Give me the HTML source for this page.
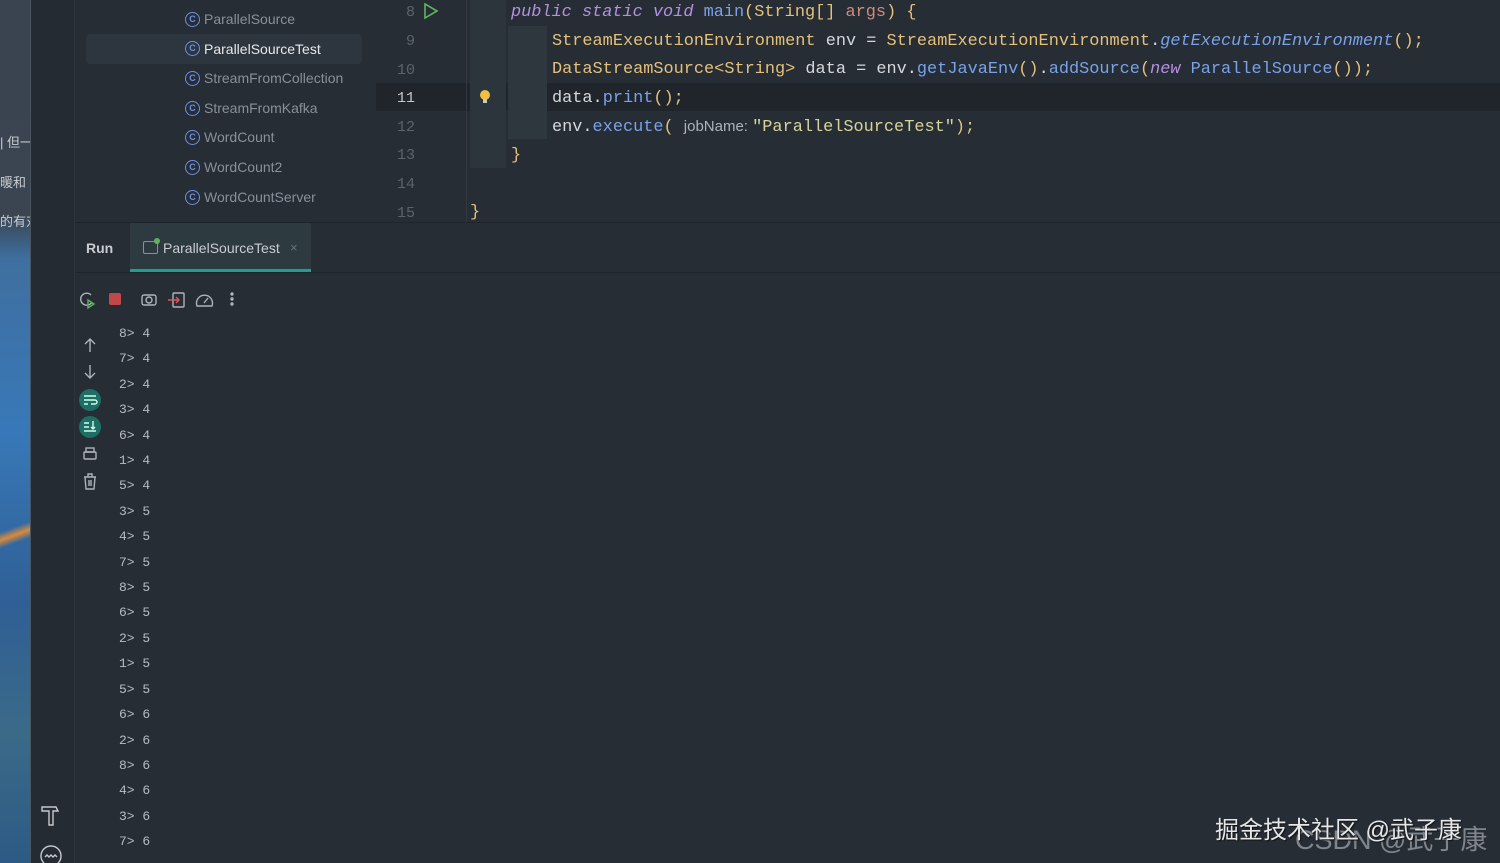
<!DOCTYPE html>
<html><head><meta charset="utf-8"><style>
*{margin:0;padding:0;box-sizing:border-box}
html,body{width:1500px;height:863px;overflow:hidden}
body{background:#262d35;position:relative;font-family:"Liberation Sans","Noto Sans CJK SC",sans-serif;color:#bcbec4}
.a{position:absolute;white-space:pre}
.code{font-family:"Liberation Mono",monospace;font-size:16.9px;line-height:20px}
.ln{font-family:"Liberation Mono",monospace;font-size:15px;color:#5c636c;width:40px;text-align:right}
.out{font-family:"Liberation Mono",monospace;font-size:13px;color:#b7bcc2;left:119px}
.y{color:#e5c07b}.b{color:#7aa2e8}.p{color:#b58fe0;font-style:italic}.s{color:#d6d49a}.r{color:#d08c7a}.w{color:#d5d8dc}
.tree{font-size:14px;color:#8a9099;left:204px}
.ci{position:absolute;left:185px;width:15px;height:15px;border:1.5px solid #6f8fe6;border-radius:50%;font-size:9px;color:#6f8fe6;text-align:center;line-height:12px;font-weight:bold}
</style></head><body>
<div class="a" style="left:0;top:0;width:30px;height:863px;background:linear-gradient(180deg,#3a4450 0%,#3b4552 25%,#3f6f9f 30%,#3878b8 50%,#2f5f95 70%,#3b6a88 85%,#2d5a85 100%)"></div>
<div class="a" style="left:0;top:520px;width:30px;height:30px;background:linear-gradient(160deg,transparent 30%,#d98a3a 50%,transparent 70%)"></div>
<div class="a" style="left:0;top:132px;font-size:13px;color:#c8ccd2">| 但一</div>
<div class="a" style="left:0;top:172px;font-size:13px;color:#c8ccd2">暖和</div>
<div class="a" style="left:0;top:211px;font-size:13px;color:#c8ccd2">的有对</div>
<div class="a" style="left:30px;top:0;width:1px;height:863px;background:#4b5560"></div>
<div class="a" style="left:31px;top:0;width:43px;height:863px;background:#252b32"></div>
<div class="a" style="left:74px;top:0;width:1px;height:863px;background:#2c333b"></div>

<div class="a" style="left:86px;top:34px;width:276px;height:30px;background:#2d353e;border-radius:4px"></div>
<div class="ci" style="top:12px">C</div><div class="a tree" style="top:11px">ParallelSource</div>
<div class="ci" style="top:41px">C</div><div class="a tree" style="top:41px;color:#e6e8eb">ParallelSourceTest</div>
<div class="ci" style="top:71px">C</div><div class="a tree" style="top:70px">StreamFromCollection</div>
<div class="ci" style="top:101px">C</div><div class="a tree" style="top:100px">StreamFromKafka</div>
<div class="ci" style="top:130px">C</div><div class="a tree" style="top:129px">WordCount</div>
<div class="ci" style="top:160px">C</div><div class="a tree" style="top:159px">WordCount2</div>
<div class="ci" style="top:190px">C</div><div class="a tree" style="top:189px">WordCountServer</div>

<div class="a" style="left:376px;top:83px;width:1124px;height:28px;background:#1f252b"></div>
<div class="a" style="left:466px;top:0;width:1px;height:222px;background:#313840"></div>
<div class="a" style="left:470px;top:0;width:36px;height:168px;background:#2c343c"></div>
<div class="a" style="left:508px;top:26px;width:39px;height:113px;background:#2e363e"></div>
<div class="a ln" style="left:375px;top:4px">8</div>
<div class="a ln" style="left:375px;top:33px">9</div>
<div class="a ln" style="left:375px;top:62px">10</div>
<div class="a ln" style="left:375px;top:90px;color:#c5c8cc">11</div>
<div class="a ln" style="left:375px;top:119px">12</div>
<div class="a ln" style="left:375px;top:147px">13</div>
<div class="a ln" style="left:375px;top:176px">14</div>
<div class="a ln" style="left:375px;top:205px">15</div>
<svg class="a" style="left:422px;top:2px" width="18" height="18"><path d="M3 2 L15 9 L3 16 Z" fill="none" stroke="#5fb35f" stroke-width="1.6"/></svg>
<svg class="a" style="left:478px;top:88px" width="14" height="18"><circle cx="7" cy="7" r="5" fill="#f0c040"/><rect x="5" y="11" width="4" height="4" fill="#c9c9c9"/></svg>

<div class="a code" style="left:511px;top:3px"><span class="p">public static void </span><span class="b">main</span><span class="y">(String[] </span><span class="r">args</span><span class="y">) {</span></div>
<div class="a code" style="left:552px;top:32px"><span class="y">StreamExecutionEnvironment </span><span class="w">env = </span><span class="y">StreamExecutionEnvironment</span><span class="w">.</span><span class="b" style="font-style:italic">getExecutionEnvironment</span><span class="y">();</span></div>
<div class="a code" style="left:552px;top:60px"><span class="y">DataStreamSource&lt;String&gt; </span><span class="w">data = env.</span><span class="b">getJavaEnv</span><span class="y">()</span><span class="w">.</span><span class="b">addSource</span><span class="y">(</span><span class="p">new </span><span class="b">ParallelSource</span><span class="y">());</span></div>
<div class="a code" style="left:552px;top:89px"><span class="w">data.</span><span class="b">print</span><span class="y">();</span></div>
<div class="a code" style="left:552px;top:117px"><span class="w">env.</span><span class="b">execute</span><span class="y">( </span><span style="font-family:'Liberation Sans';font-size:15px;color:#aeb3b9">jobName: </span><span class="s">"ParallelSourceTest"</span><span class="y">);</span></div>
<div class="a code" style="left:511px;top:146px"><span class="y">}</span></div>
<div class="a code" style="left:470px;top:203px"><span class="y">}</span></div>

<div class="a" style="left:75px;top:222px;width:1425px;height:1px;background:#1e2429"></div>
<div class="a" style="left:75px;top:272px;width:1425px;height:1px;background:#1f252b"></div>
<div class="a" style="left:130px;top:223px;width:181px;height:49px;background:#2d3a40"></div>
<div class="a" style="left:130px;top:269px;width:181px;height:3px;background:#1f9e92"></div>
<div class="a" style="left:86px;top:240px;font-size:14px;font-weight:bold;color:#c9ccd0">Run</div>
<div class="a" style="left:143px;top:241px;width:15px;height:13px;border:1.5px solid #6f8fe6;border-radius:2px"></div>
<div class="a" style="left:154px;top:238px;width:6px;height:6px;background:#5fb35f;border-radius:50%"></div>
<div class="a" style="left:163px;top:240px;font-size:14px;color:#c9ccd0">ParallelSourceTest</div>
<div class="a" style="left:290px;top:240px;font-size:13px;color:#6c737b">×</div>

<svg class="a" style="left:78px;top:290px" width="170" height="20" fill="none" stroke="#aeb3b9" stroke-width="1.4">
<path d="M13 5 A6 6 0 1 0 14 12"/><path d="M10 10 L16 14 L10 18 Z" stroke="#5fb35f"/>
<rect x="31" y="3" width="12" height="12" rx="2" fill="#c14848" stroke="none"/>
<rect x="64" y="5" width="14" height="10" rx="2"/><circle cx="71" cy="10" r="3"/>
<rect x="95" y="3" width="11" height="14" rx="1"/><path d="M90 10 H101 M98 7 L101 10 L98 13" stroke="#e05555"/>
<path d="M119 16 A8 8 0 1 1 134 16 Z"/><path d="M126 13 L130 8"/>
<circle cx="154" cy="4" r="1" fill="#aeb3b9"/><circle cx="154" cy="9" r="1" fill="#aeb3b9"/><circle cx="154" cy="14" r="1" fill="#aeb3b9"/>
</svg>

<svg class="a" style="left:78px;top:335px" width="26" height="160" fill="none" stroke="#aeb3b9" stroke-width="1.4">
<path d="M12 4 V17 M7 9 L12 4 L17 9"/>
<path d="M12 30 V43 M7 38 L12 43 L17 38"/>
<circle cx="12" cy="65" r="11" fill="#1f6e66" stroke="none"/><path d="M6 61 H18 M6 65 H17 A2 2 0 0 1 17 69 H13 M6 69 H10" stroke="#cfe"/>
<circle cx="12" cy="92" r="11" fill="#1f6e66" stroke="none"/><path d="M6 88 H11 M6 92 H11 M6 96 H18 M15 86 V94 M13 92 L15 94 L17 92" stroke="#cfe"/>
<rect x="6" y="117" width="12" height="7" rx="1"/><rect x="8" y="113" width="8" height="4"/>
<path d="M6 142 H18 M10 142 V139 H14 V142 M7 142 L8 154 H16 L17 142 M11 145 V151 M13 145 V151"/>
</svg>
<svg class="a" style="left:38px;top:803px" width="26" height="60" fill="none" stroke="#c5c9ce" stroke-width="1.4">
<path d="M4 4 H18 L20 8 H15 V22 H11 V8 H4 Z"/>
<circle cx="13" cy="53" r="10"/><path d="M7 54 l2-2 2 2 2-2 2 2 2-2 2 2"/>
</svg>

<div class="a out" style="top:321px;line-height:25.4px">8&gt; 4
7&gt; 4
2&gt; 4
3&gt; 4
6&gt; 4
1&gt; 4
5&gt; 4
3&gt; 5
4&gt; 5
7&gt; 5
8&gt; 5
6&gt; 5
2&gt; 5
1&gt; 5
5&gt; 5
6&gt; 6
2&gt; 6
8&gt; 6
4&gt; 6
3&gt; 6
7&gt; 6</div>

<div class="a" style="left:1295px;top:818px;font-size:27px;color:rgba(200,205,210,0.55)">CSDN @武子康</div>
<div class="a" style="left:1215px;top:810px;font-size:24px;color:#e4e6e8;text-shadow:1px 1px 1px #111">掘金技术社区 @武子康</div>
</body></html>
